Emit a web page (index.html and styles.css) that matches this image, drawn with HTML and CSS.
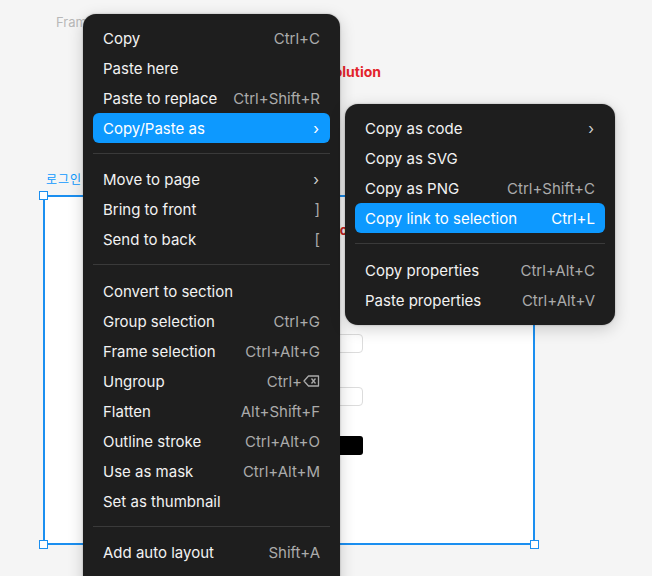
FILE: index.html
```html
<!DOCTYPE html>
<html>
<head>
<meta charset="utf-8">
<link rel="stylesheet" href="styles.css">
</head>
<body>
<div class="canvas">
  <span class="frame-name">Frame</span>
  <span class="title-red">Solution</span>
  <span class="label-kr">로그인</span>
  <div class="frame">
    <span class="handle tl"></span><span class="handle tr"></span>
    <span class="handle bl"></span><span class="handle br"></span>
    <div class="form">
      <div class="form-title">Welcome to</div>
      <div class="input input-first"></div>
      <div class="input input-second"></div>
      <div class="button"></div>
    </div>
  </div>

  <div class="menu main-menu">
    <div class="item"><span>Copy</span><span class="sc">Ctrl+C</span></div>
    <div class="item"><span>Paste here</span></div>
    <div class="item"><span>Paste to replace</span><span class="sc">Ctrl+Shift+R</span></div>
    <div class="item active"><span>Copy/Paste as</span><span class="chev">›</span></div>
    <div class="sep"></div>
    <div class="item"><span>Move to page</span><span class="chev">›</span></div>
    <div class="item"><span>Bring to front</span><span class="sc">]</span></div>
    <div class="item"><span>Send to back</span><span class="sc">[</span></div>
    <div class="sep sep-b"></div>
    <div class="item"><span>Convert to section</span></div>
    <div class="item"><span>Group selection</span><span class="sc">Ctrl+G</span></div>
    <div class="item"><span>Frame selection</span><span class="sc">Ctrl+Alt+G</span></div>
    <div class="item"><span>Ungroup</span><span class="sc">Ctrl+<svg class="bksp" width="17" height="12" viewBox="0 0 17 12"><path d="M5.5 1H15.5V11H5.5L1 6Z" fill="none" stroke="currentColor" stroke-width="1.3" stroke-linejoin="round"/><path d="M8.5 3.5L12.5 8.5M12.5 3.5L8.5 8.5" stroke="currentColor" stroke-width="1.3"/></svg></span></div>
    <div class="item"><span>Flatten</span><span class="sc">Alt+Shift+F</span></div>
    <div class="item"><span>Outline stroke</span><span class="sc">Ctrl+Alt+O</span></div>
    <div class="item"><span>Use as mask</span><span class="sc">Ctrl+Alt+M</span></div>
    <div class="item"><span>Set as thumbnail</span></div>
    <div class="sep"></div>
    <div class="item"><span>Add auto layout</span><span class="sc">Shift+A</span></div>
  </div>

  <div class="menu sub-menu">
    <div class="item"><span>Copy as code</span><span class="chev">›</span></div>
    <div class="item"><span>Copy as SVG</span></div>
    <div class="item"><span>Copy as PNG</span><span class="sc">Ctrl+Shift+C</span></div>
    <div class="item active"><span>Copy link to selection</span><span class="sc">Ctrl+L</span></div>
    <div class="sep sep-b"></div>
    <div class="item"><span>Copy properties</span><span class="sc">Ctrl+Alt+C</span></div>
    <div class="item"><span>Paste properties</span><span class="sc">Ctrl+Alt+V</span></div>
  </div>
</div>
</body>
</html>
```
FILE: styles.css
```css
* { box-sizing: border-box; }
html, body { margin: 0; padding: 0; }
body {
  width: 652px;
  height: 576px;
  overflow: hidden;
  background: #f5f5f5;
  font-family: Inter, "Noto Sans", sans-serif;
}
.canvas {
  position: relative;
  width: 652px;
  height: 576px;
  overflow: hidden;
}
.frame-name {
  position: absolute;
  left: 56px;
  top: 14px;
  font-size: 13px;
  color: #b8b8b8;
}
.title-red {
  position: absolute;
  right: 271px;
  top: 63px;
  font-size: 14px;
  font-weight: 700;
  color: #e3242b;
}
.label-kr {
  position: absolute;
  left: 46px;
  top: 170px;
  font-size: 12px;
  color: #0d99ff;
  font-family: "Noto Sans CJK KR", sans-serif;
  letter-spacing: 1px;
}
.frame {
  position: absolute;
  left: 43px;
  top: 195px;
  width: 492px;
  height: 350px;
  background: #fff;
  border: 2px solid #1b8ff0;
  padding: 25px 0 0 118px;
}
.handle {
  position: absolute;
  width: 9px;
  height: 9px;
  background: #fff;
  border: 1.5px solid #1b8ff0;
}
.handle.tl { left: -6px; top: -6px; }
.handle.tr { right: -6px; top: -6px; }
.handle.bl { left: -6px; bottom: -6px; }
.handle.br { right: -6px; bottom: -6px; }
.form {
  width: 200px;
  display: flex;
  flex-direction: column;
}
.form-title {
  font-size: 13px;
  font-weight: 700;
  color: #c22;
  text-align: right;
  margin-right: -20px;
  height: 16px;
  line-height: 16px;
}
.input {
  height: 19px;
  border: 1px solid #dcdcdc;
  border-radius: 4px;
}
.input-first { margin-top: 96px; }
.input-second { margin-top: 34px; }
.button {
  height: 19px;
  background: #000;
  border-radius: 3px;
  margin-top: 30px;
}
.menu {
  position: absolute;
  background: #1e1e1e;
  border-radius: 13px;
  padding: 9px 10px 10px;
  box-shadow: 0 4px 16px rgba(0,0,0,0.18), 0 0 2px rgba(0,0,0,0.3);
  color: #f2f2f2;
  font-size: 15px;
}
.main-menu {
  left: 83px;
  top: 14px;
  width: 257px;
  padding-bottom: 40px;
}
.sub-menu {
  left: 345px;
  top: 104px;
  width: 270px;
}
.item {
  height: 30px;
  display: flex;
  align-items: center;
  justify-content: space-between;
  padding: 0 10px;
  border-radius: 6px;
  white-space: nowrap;
}
.item.active {
  background: #0d99ff;
  color: #fff;
}
.sc {
  color: #ababab;
  display: flex;
  align-items: center;
}
.item.active .sc { color: #fff; }
.chev {
  font-size: 15px;
  line-height: 1;
  color: #d0d0d0;
  margin-right: 1px;
}
.item.active .chev { color: #fff; }
.bksp { margin-left: 1px; }
.sep {
  height: 1px;
  background: #3a3a3a;
  margin: 10px 0;
}
.sep-b { margin-bottom: 11px; }
```
